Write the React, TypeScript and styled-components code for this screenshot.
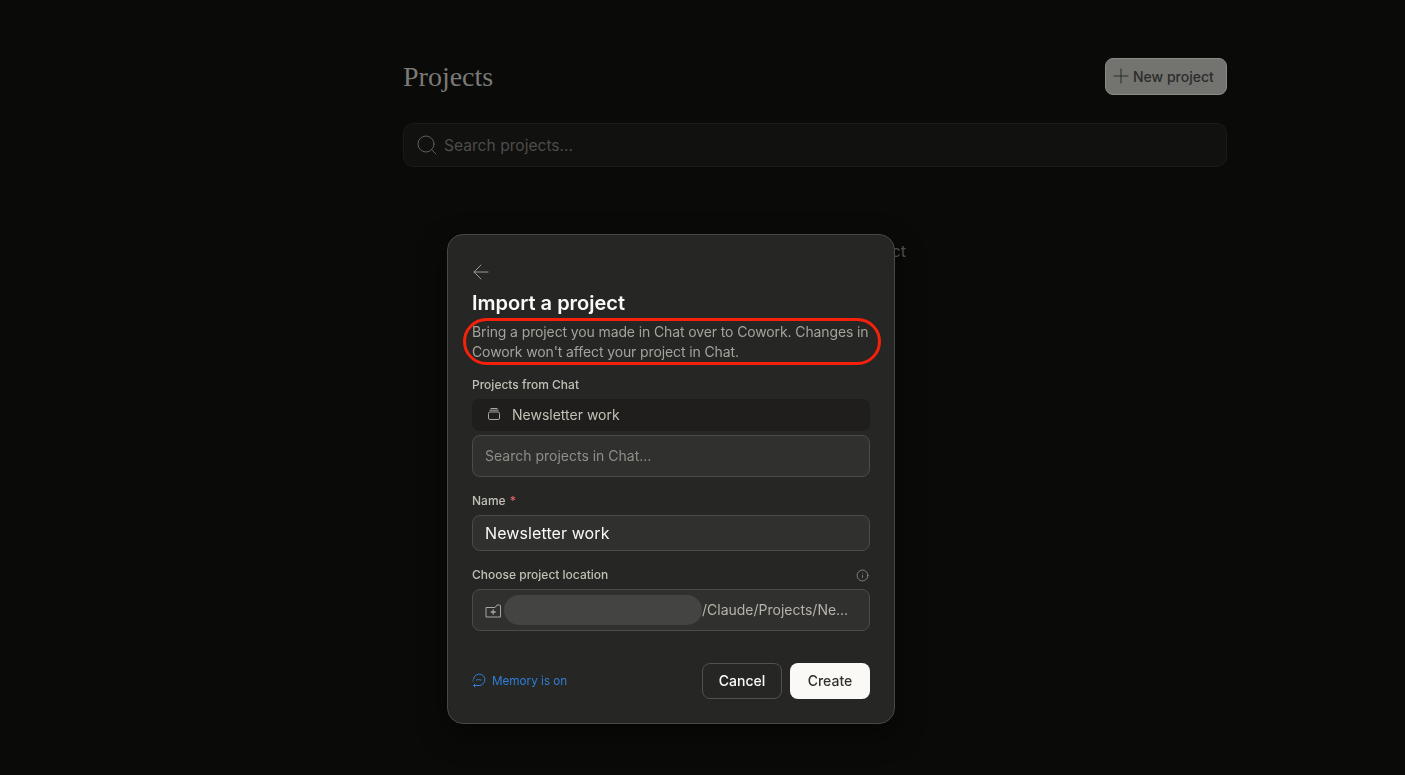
import React from "react";
import styled, { createGlobalStyle } from "styled-components";
import { ArrowLeft, Info, Plus, Search } from "lucide-react";

const GlobalStyle = createGlobalStyle`
  html, body {
    margin: 0;
    height: 100%;
    background: #0a0a09;
    font-family: "Inter", "Liberation Sans", sans-serif;
    -webkit-font-smoothing: antialiased;
  }
  * { box-sizing: border-box; }
`;

const App = () => {
  return (
    <>
      <GlobalStyle />
      <Page>
        <Content>
          <Header>
            <PageTitle>Projects</PageTitle>
            <NewButton>
              <PlusIcon size={24} strokeWidth={1} />
              New project
            </NewButton>
          </Header>
          <SearchBar>
            <Search size={24} strokeWidth={0.9} color="#66665f" />
            <SearchText>Search projects...</SearchText>
          </SearchBar>
          <EmptyText>Create your first project</EmptyText>
        </Content>
      </Page>
      <Overlay>
        <Modal>
          <BackButton>
            <ArrowLeft size={24} strokeWidth={1} />
          </BackButton>
          <Title>Import a project</Title>
          <Description>
            Bring a project you made in Chat over to Cowork. Changes in Cowork
            won't affect your project in Chat.
            <Callout />
          </Description>
          <Label $top={14}>Projects from Chat</Label>
          <ProjectRow>
            <ProjectIcon />
            Newsletter work
          </ProjectRow>
          <SearchInput>Search projects in Chat…</SearchInput>
          <Label $top={15}>
            Name <Required>*</Required>
          </Label>
          <NameInput>Newsletter work</NameInput>
          <LabelRow>
            <Label $top={0}>Choose project location</Label>
            <InfoIcon size={13} strokeWidth={1.2} color="#a8a8a0" />
          </LabelRow>
          <LocationInput>
            <FolderPlusIcon />
            <Redacted />
            <LocationPath>/Claude/Projects/Ne…</LocationPath>
          </LocationInput>
          <Footer>
            <MemoryLink>
              <MemoryIcon />
              Memory is on
            </MemoryLink>
            <Actions>
              <CancelButton>Cancel</CancelButton>
              <CreateButton>Create</CreateButton>
            </Actions>
          </Footer>
        </Modal>
      </Overlay>
    </>
  );
};

const ProjectIcon = () => (
  <svg width="14" height="14" viewBox="0 0 14 14" fill="none" stroke="#a8a8a0" strokeWidth="1">
    <rect x="1.5" y="5" width="11" height="7.5" rx="1.5" />
    <path d="M2.5 3.2h9M3.5 1.5h7" />
  </svg>
);

const FolderPlusIcon = () => (
  <svg width="17" height="15" viewBox="0 0 17 15" fill="none" stroke="#a8a8a0" strokeWidth="1">
    <path d="M1 4.5h9l2-2.5h2.5a1 1 0 0 1 1 1v11H1z" strokeLinejoin="round" />
    <path d="M8.2 6.5v5M5.7 9h5" strokeWidth="1.3" />
  </svg>
);

const MemoryIcon = () => (
  <svg width="14" height="15" viewBox="0 0 14 15" fill="none" stroke="#2f7fd6" strokeWidth="1">
    <path d="M1.5 6.5a5.7 5.7 0 1 1 9.8 4.2 5.7 5.7 0 0 1-4.3 1.8H1.5" />
    <path d="M3.2 10.8l-1.7 1.7 1.7 1.7" />
    <path d="M1 8.5v-1M4 7h1.5l1-1 1 1h2" />
  </svg>
);

const Page = styled.div`
  min-height: 775px;
  padding: 58px 0 0 403px;
  overflow: hidden;
`;

const Content = styled.main`
  width: 824px;
`;

const Header = styled.header`
  display: flex;
  align-items: center;
  justify-content: space-between;
  height: 37px;
`;

const PageTitle = styled.h1`
  margin: 0;
  font-family: "Liberation Serif", serif;
  font-size: 28px;
  font-weight: 400;
  color: #7a7a76;
`;

const NewButton = styled.button`
  display: flex;
  align-items: center;
  width: 122px;
  height: 37px;
  padding: 0 0 1px 3px;
  border: 1px solid #8a8a86;
  border-radius: 8px;
  background: #73736f;
  color: #2c2c2a;
  font: 500 14px "Inter", sans-serif;
`;

const PlusIcon = styled(Plus)`
  flex: none;
`;

const SearchBar = styled.div`
  display: flex;
  align-items: center;
  gap: 5px;
  height: 44px;
  margin-top: 28px;
  padding: 0 11px;
  border: 1px solid #1b1b1a;
  border-radius: 10px;
  background: #111110;
`;

const SearchText = styled.span`
  font-size: 15.6px;
  color: #4c4c48;
`;

const EmptyText = styled.p`
  margin: 74px 0 0;
  padding-left: 2px;
  text-align: center;
  font-size: 16px;
  color: #55554f;
`;

const Overlay = styled.div`
  position: fixed;
  inset: 0;
  display: flex;
  align-items: flex-start;
  padding: 234px 0 0 447px;
`;

const Modal = styled.section`
  display: flex;
  flex-direction: column;
  width: 448px;
  height: 490px;
  padding: 28px 24px 24px;
  border: 1px solid #484846;
  border-radius: 16px;
  background: #262625;
  box-shadow: 0 10px 30px rgba(0, 0, 0, 0.45);
`;

const BackButton = styled.div`
  display: flex;
  align-items: center;
  height: 18px;
  margin-left: -3px;
  color: #9a9a93;
`;

const Title = styled.h2`
  margin: 9px 0 0;
  font-size: 20px;
  line-height: 26px;
  font-weight: 600;
  color: #faf9f5;
`;

const Description = styled.p`
  position: relative;
  margin: 6px 0 0;
  font-size: 14px;
  letter-spacing: -0.12px;
  line-height: 20px;
  color: #a3a29b;
`;

const Callout = styled.span`
  position: absolute;
  left: -9px;
  top: -4px;
  width: 418px;
  height: 47px;
  border: 3px solid #f5210a;
  border-radius: 24px;
`;

const Label = styled.div<{ $top: number }>`
  margin-top: ${(p) => p.$top}px;
  font-size: 12px;
  line-height: 18px;
  font-weight: 500;
  color: #c2c0b6;
`;

const Required = styled.span`
  color: #e5606a;
  margin-left: 1px;
`;

const LabelRow = styled.div`
  display: flex;
  align-items: center;
  justify-content: space-between;
  margin-top: 15px;
`;

const InfoIcon = styled(Info)`
  margin-right: 1px;
`;

const ProjectRow = styled.div`
  display: flex;
  align-items: center;
  gap: 11px;
  height: 32px;
  margin-top: 5px;
  padding: 0 0 2px 15px;
  border-radius: 8px;
  background: #1f1e1d;
  font-size: 14px;
  color: #c2c0b6;
`;

const SearchInput = styled.div`
  display: flex;
  align-items: center;
  height: 42px;
  margin-top: 4px;
  padding: 0 12px 2px;
  border: 1px solid #4c4c4a;
  border-radius: 8px;
  background: #30302e;
  font-size: 14px;
  color: #8f8e87;
`;

const NameInput = styled.div`
  display: flex;
  align-items: center;
  height: 36px;
  margin-top: 5px;
  padding: 0 12px 1px;
  border: 1px solid #4c4c4a;
  border-radius: 8px;
  background: #30302e;
  font-size: 16px;
  letter-spacing: 0.1px;
  color: #faf9f5;
`;

const LocationInput = styled.div`
  display: flex;
  align-items: center;
  height: 42px;
  margin-top: 5px;
  padding: 0 12px;
  border: 1px solid #4c4c4a;
  border-radius: 8px;
  background: #30302e;
`;

const Redacted = styled.span`
  flex: none;
  width: 198px;
  height: 30px;
  margin-left: 2px;
  border-radius: 15px;
  background: #444443;
`;

const LocationPath = styled.span`
  padding-bottom: 2px;
  font-size: 14px;
  color: #b5b3aa;
`;

const Footer = styled.footer`
  display: flex;
  align-items: center;
  justify-content: space-between;
  margin-top: auto;
`;

const MemoryLink = styled.div`
  display: flex;
  align-items: center;
  gap: 6px;
  padding-bottom: 1px;
  font-size: 11.7px;
  color: #2f7fd6;
`;

const Actions = styled.div`
  display: flex;
  gap: 8px;
`;

const CancelButton = styled.button`
  width: 80px;
  height: 36px;
  padding: 0 0 2px;
  border: 1px solid #51514e;
  border-radius: 8px;
  background: transparent;
  color: #faf9f5;
  font: 500 14px "Inter", sans-serif;
`;

const CreateButton = styled.button`
  width: 80px;
  height: 36px;
  padding: 0 0 2px;
  border: none;
  border-radius: 8px;
  background: #faf9f5;
  color: #30302e;
  font: 500 14px "Inter", sans-serif;
`;

export default App;
